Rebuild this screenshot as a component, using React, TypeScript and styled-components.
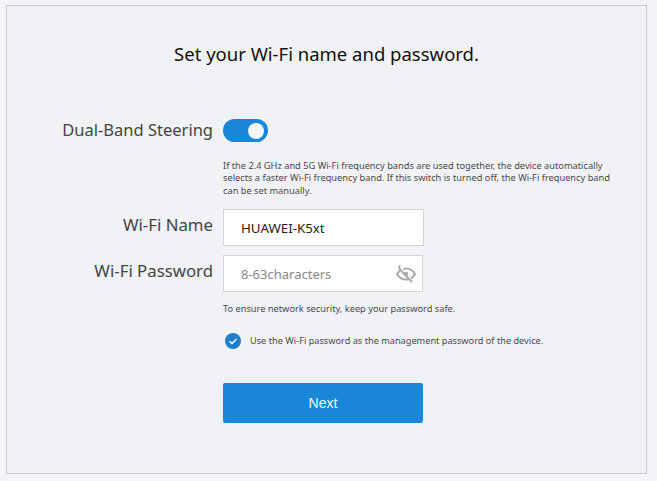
import styled, { createGlobalStyle } from 'styled-components';

const GlobalStyle = createGlobalStyle`
  html, body {
    margin: 0;
    padding: 0;
    background: #f2f4f7;
    font-family: "Noto Sans", "Open Sans", sans-serif;
  }
`;

const Page = styled.div`
  width: 657px;
  height: 481px;
  box-sizing: border-box;
  padding: 5px 10px 7px 6px;
`;

const Panel = styled.main`
  height: 100%;
  box-sizing: border-box;
  border: 1px solid #c6c9cf;
  background: #f0f2f6;
  padding-top: 35px;
`;

const Title = styled.h1`
  margin: 0 0 51px;
  height: 26px;
  line-height: 26px;
  text-align: center;
  font-size: 18.5px;
  font-weight: 400;
  color: #111;
`;

const Row = styled.div<{ $gap?: number }>`
  display: grid;
  grid-template-columns: 206px 1fr;
  column-gap: 10px;
  margin-bottom: ${({ $gap }) => $gap ?? 0}px;
`;

const Label = styled.label<{ $top?: number; $size?: number }>`
  text-align: right;
  font-size: ${({ $size }) => $size ?? 16.8}px;
  line-height: 24px;
  color: #444;
  white-space: nowrap;
  padding-top: ${({ $top }) => $top ?? 0}px;
`;

const Switch = styled.div`
  width: 45px;
  height: 23px;
  margin-top: 1px;
  border-radius: 12px;
  background: #1a86d8;
  display: flex;
  justify-content: flex-end;
  align-items: center;
  padding-right: 4px;
  box-sizing: border-box;
`;

const Knob = styled.span`
  width: 16px;
  height: 16px;
  border-radius: 50%;
  background: #f4f6f8;
`;

const Hint = styled.p<{ $width?: number }>`
  margin: 0;
  font-size: 9.25px;
  line-height: 12.4px;
  color: #4a4a4a;
  width: ${({ $width }) => $width ?? 392}px;
`;

const InputBox = styled.div<{ $width: number }>`
  width: ${({ $width }) => $width}px;
  height: 37px;
  box-sizing: border-box;
  border: 1px solid #d3d5d9;
  background: #fff;
  padding: 0 6px 0 17px;
  display: flex;
  align-items: center;
  justify-content: space-between;
  font-size: 13px;
`;

const Value = styled.span`
  color: #222;
  font-size: 13.3px;
`;

const Placeholder = styled.span`
  color: #888;
`;

const CheckRow = styled.div`
  display: flex;
  align-items: center;
  gap: 9px;
  margin-left: 2px;
`;

const CheckText = styled.span`
  font-size: 9.2px;
  line-height: 13px;
  color: #4a4a4a;
`;

const NextButton = styled.button`
  display: block;
  width: 200px;
  height: 40px;
  border: none;
  border-radius: 2px;
  background: #1a86d8;
  color: #f2f8fd;
  font-family: "Liberation Sans", Arial, sans-serif;
  font-size: 14px;
  font-weight: 400;
  padding: 0;
`;

const EyeOff = () => (
  <svg width="20" height="20" viewBox="0 0 20 20" fill="none" stroke="#a9abad" strokeWidth="2">
    <path d="M3.5 2C2.5 3.5 3.5 5 5 6.5L15.5 17.5" strokeLinecap="round" />
    <path d="M7 5C8 4.6 9 4.5 10 4.5C13.5 4.5 17 6.5 19 10C18 12 16.5 13.5 15 14.3" />
    <path d="M4 6.5C2.8 7.5 1.8 8.7 1 10C3 13.5 6.5 15.5 10 15.5C10.8 15.5 11.5 15.4 12.3 15.2" />
    <circle cx="10" cy="10" r="2.2" fill="#a9abad" stroke="none" />
  </svg>
);

const CheckIcon = () => (
  <svg width="16" height="16" viewBox="0 0 16 16">
    <circle cx="8" cy="8" r="8" fill="#1e7fc8" />
    <path d="M4.5 8.2L7 10.5L11.5 6" fill="none" stroke="#fff" strokeWidth="1.5" />
  </svg>
);

export default function App() {
  return (
    <Page>
      <GlobalStyle />
      <Panel>
        <Title>Set your Wi-Fi name and password.</Title>
        <Row $gap={18}>
          <Label $size={16.5}>Dual-Band Steering</Label>
          <Switch>
            <Knob />
          </Switch>
        </Row>
        <Row $gap={12}>
          <span />
          <Hint>
            If the 2.4 GHz and 5G Wi-Fi frequency bands are used together, the device automatically
            selects a faster Wi-Fi frequency band. If this switch is turned off, the Wi-Fi frequency
            band can be set manually.
          </Hint>
        </Row>
        <Row $gap={9}>
          <Label $top={4}>Wi-Fi Name</Label>
          <InputBox $width={201}>
            <Value>HUAWEI-K5xt</Value>
          </InputBox>
        </Row>
        <Row $gap={11}>
          <Label $top={4}>Wi-Fi Password</Label>
          <InputBox $width={200}>
            <Placeholder>8-63characters</Placeholder>
            <EyeOff />
          </InputBox>
        </Row>
        <Row $gap={17}>
          <span />
          <Hint>To ensure network security, keep your password safe.</Hint>
        </Row>
        <Row $gap={34}>
          <span />
          <CheckRow>
            <CheckIcon />
            <CheckText>Use the Wi-Fi password as the management password of the device.</CheckText>
          </CheckRow>
        </Row>
        <Row>
          <span />
          <NextButton>Next</NextButton>
        </Row>
      </Panel>
    </Page>
  );
}
